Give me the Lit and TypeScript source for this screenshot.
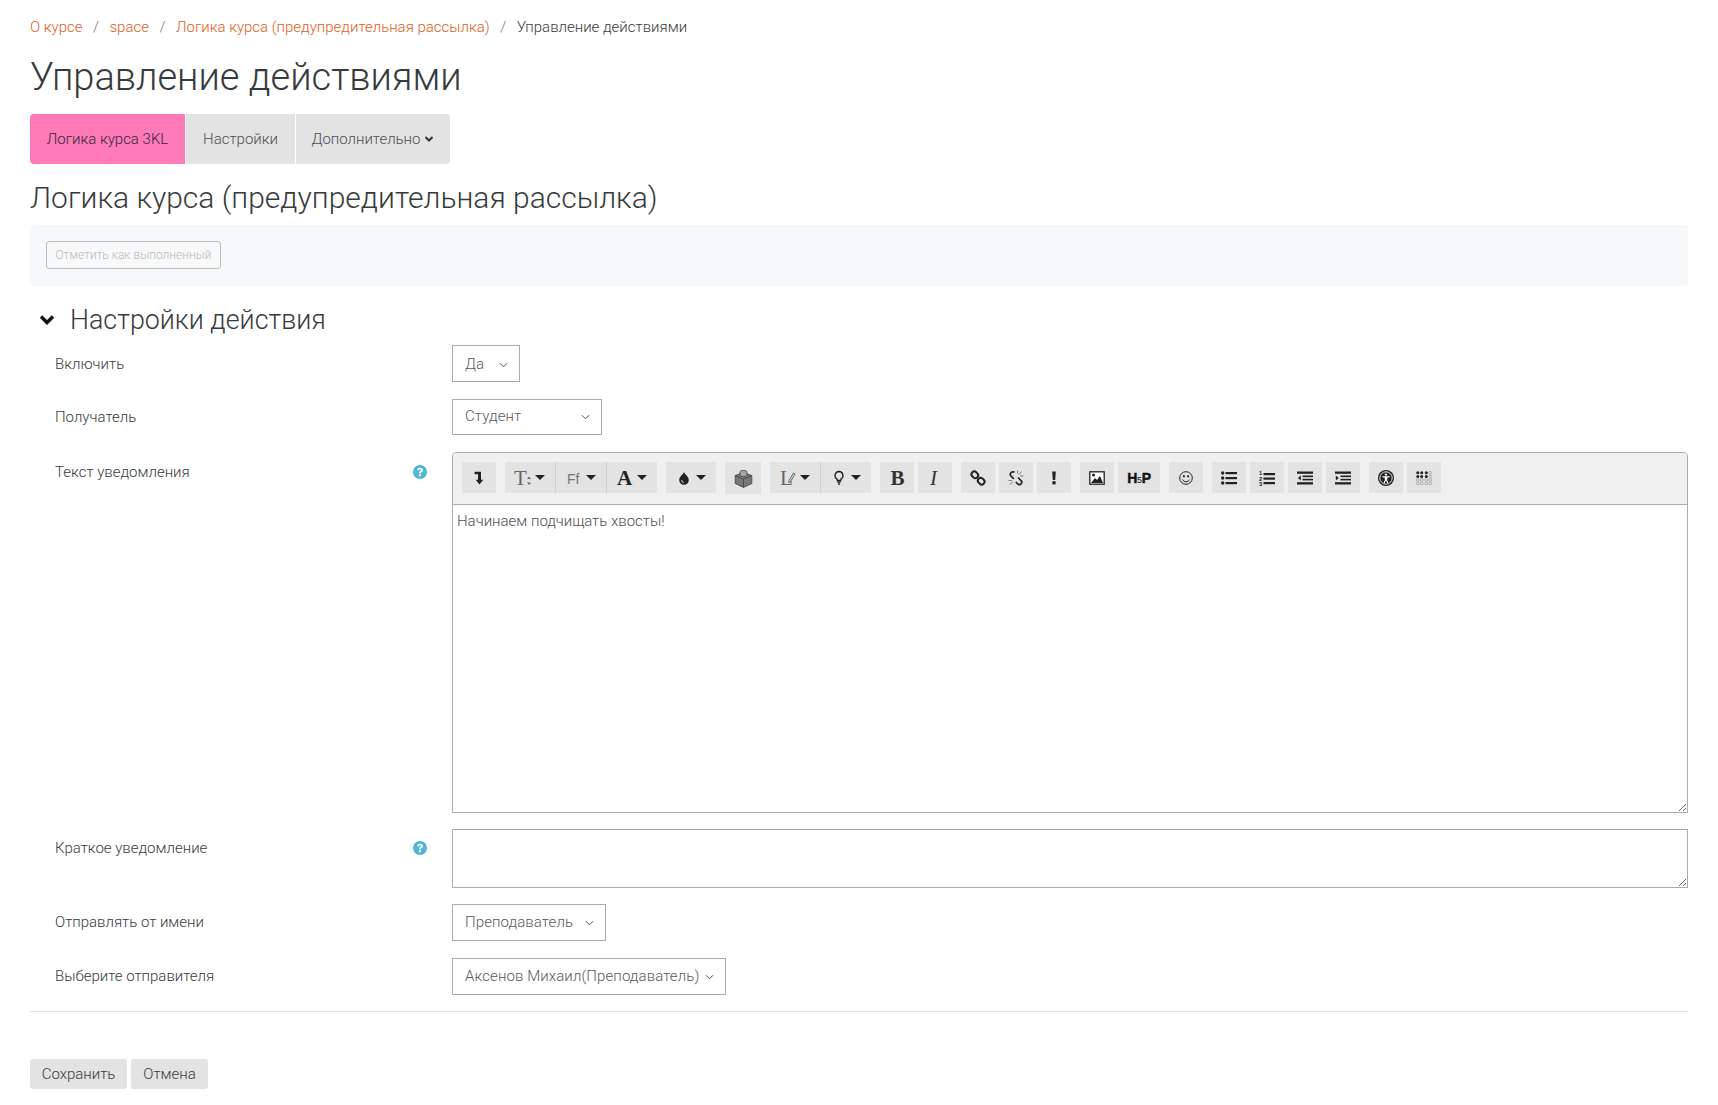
import { LitElement, html, css, svg } from "lit";
import { customElement } from "lit/decorators.js";

const chev = html`<svg class="chev" viewBox="0 0 10 6"><path d="M1 1l4 4 4-4" fill="none" stroke="#4a4f55" stroke-width="1.1"/></svg>`;

const I: Record<string, any> = {
  redo: svg`<path d="M3.500 1.800h6.500v8h2.300L8.500 14.500 4.700 9.800H7V4.300H3.500z" fill="#222"/>`,
  drop: svg`<path d="M8 2c1 2.500 4.800 5 4.800 8a4.800 4.800 0 0 1-9.600 0C3.200 7 7 4.500 8 2z" fill="#222"/><path d="M5.700 10.200a2.300 2.300 0 0 0 1.900 2.300" stroke="#fff" stroke-width="1" fill="none"/>`,
  lego: svg`<path d="M8 3l7 2.500v6.700L8 15.500 1 12.200V5.500z" fill="#777" stroke="#444" stroke-width=".7"/><path d="M1 5.500L8 8.500l7-3M8 8.500v7" stroke="#444" stroke-width=".7" fill="none"/><path d="M5 2.800c0-2.200 6-2.200 6 0V5c0 1.800-6 1.800-6 0z" fill="#a5a5a5" stroke="#444" stroke-width=".7"/>`,
  bulb: svg`<path d="M8 1.500a4 4 0 0 0-2.500 7.100c.6.600.8 1.100.8 1.900h3.400c0-.8.200-1.300.8-1.900A4 4 0 0 0 8 1.500z" fill="none" stroke="#222" stroke-width="1.400"/><path d="M6.300 12h3.400M7 14h2" stroke="#222" stroke-width="1.500"/>`,
  link: svg`<g fill="none" stroke="#222" stroke-width="2"><rect x="1.300" y="2" width="7" height="5.600" rx="2.700" transform="rotate(45 4.800 4.800)"/><rect x="7.700" y="8.400" width="7" height="5.600" rx="2.700" transform="rotate(45 11.200 11.200)"/></g>`,
  unlink: svg`<g fill="none" stroke="#222" stroke-width="1.700"><path d="M6.500 2.300C4.300.9 1.500 3 2.500 5.500L5.800 8.800M10 7.500l3.400 3.500c1.200 2-1 4.600-3.300 3.300L7.800 12"/></g><path d="M9.500 .5v3M13.500 1.500L11 4.500M15.500 6h-3.500M.5 10.500H4M1.800 14.800L5 11.800" stroke="#666" stroke-width=".8"/>`,
  bang: svg`<path d="M6.200 1.500h3.600l-.6 8.500H6.800z" fill="#222"/><rect x="6.400" y="11.200" width="3.200" height="3.200" fill="#222"/>`,
  image: svg`<rect x=".8" y="1.800" width="14.400" height="12.400" fill="#fff" stroke="#222" stroke-width="1.300"/><path d="M2 13l4-5 2 2 3-4 3 7z" fill="#222"/><circle cx="4.500" cy="5" r="1.500" fill="#222"/>`,
  smile: svg`<circle cx="8" cy="8" r="6.300" fill="none" stroke="#222" stroke-width="1"/><ellipse cx="5.900" cy="6.200" rx=".9" ry="1.300" fill="#222"/><ellipse cx="10.100" cy="6.200" rx=".9" ry="1.300" fill="#222"/><path d="M4.500 9.500c1 3 6 3 7 0" fill="none" stroke="#222"/>`,
  ul: svg`<g fill="#222"><circle cx="1.700" cy="3" r="1.700"/><circle cx="1.700" cy="8" r="1.700"/><circle cx="1.700" cy="13" r="1.700"/><rect x="4.500" y="2" width="11.500" height="2.200"/><rect x="4.500" y="7" width="11.500" height="2.200"/><rect x="4.500" y="12" width="11.500" height="2.200"/></g>`,
  ol: svg`<g fill="#222"><rect x="4.500" y="3" width="11.500" height="2.200"/><rect x="4.500" y="7.500" width="11.500" height="2.200"/><rect x="4.500" y="12" width="11.500" height="2.200"/></g><text x="0" y="5.200" class="sx bd" font-size="5.800" fill="#222">1</text><text x="0" y="10.500" class="sx bd" font-size="5.800" fill="#222">2</text><text x="0" y="15.800" class="sx bd" font-size="5.800" fill="#222">3</text>`,
  outdent: svg`<g fill="#222"><rect x="0" y="1.500" width="16" height="2.300"/><rect x="5.500" y="5.500" width="10.500" height="1.600"/><rect x="5.500" y="8.800" width="10.500" height="1.600"/><rect x="0" y="12.200" width="16" height="2.300"/><path d="M3.800 5.500v4.900L.8 8z"/></g>`,
  indent: svg`<g fill="#222"><rect x="0" y="1.500" width="16" height="2.300"/><rect x="5.500" y="5.500" width="10.500" height="1.600"/><rect x="5.500" y="8.800" width="10.500" height="1.600"/><rect x="0" y="12.200" width="16" height="2.300"/><path d="M.8 5.500v4.900L3.800 8z"/></g>`,
  a11y: svg`<circle cx="8" cy="8" r="8" fill="#222"/><circle cx="8" cy="8" r="6.200" fill="none" stroke="#fff" stroke-width=".9"/><circle cx="8" cy="4.600" r="1.200" fill="#fff"/><path d="M4.300 6.200h7.400v1L9.200 7.800v2.200l1.200 2.900H9.200L8 10.400l-1.200 2.500H5.600L6.800 10V7.800l-2.500-.6z" fill="#fff"/>`,
  braille: svg`<g fill="#222"><circle cx="1.800" cy="2.700" r="1.500"/><circle cx="5.700" cy="2.700" r="1.500"/><circle cx="1.800" cy="6.500" r="1.500"/><circle cx="5.700" cy="6.500" r="1.500"/><circle cx="10.300" cy="2.700" r="1.500"/><circle cx="10.300" cy="6.500" r="1.500"/></g><g fill="none" stroke="#999" stroke-width=".7"><circle cx="14.200" cy="2.700" r="1.400"/><circle cx="14.200" cy="6.500" r="1.400"/><circle cx="1.800" cy="10" r="1.400"/><circle cx="5.700" cy="10" r="1.400"/><circle cx="1.800" cy="13.500" r="1.400"/><circle cx="5.700" cy="13.500" r="1.400"/><circle cx="10.300" cy="10" r="1.400"/><circle cx="14.200" cy="10" r="1.400"/><circle cx="10.300" cy="13.500" r="1.400"/><circle cx="14.200" cy="13.500" r="1.400"/></g>`,
  pen: svg`<text x="0" y="15" class="tx" font-size="21" fill="#666">L</text><path d="M9 10.500l4.500-7.500 1.500 1-4.500 7.500-1.800 1z" fill="none" stroke="#555" stroke-width=".9"/>`,
  size: svg`<text x="-1" y="15" class="tx" font-size="21" fill="#666">T</text><path d="M14 6.500l-2 2.500h4zM14 15l-2-2.500h4z" fill="#666"/>`,
  ff: svg`<text x="1" y="14" class="sx" font-size="14" fill="#777">Ff</text>`,
  A: svg`<text x="0" y="15" class="tx bd" font-size="21" fill="#222">A</text>`,
  B: svg`<text x="1.500" y="15" class="tx bd" font-size="21" fill="#333">B</text>`,
  It: svg`<text x="3" y="15" class="tx it" font-size="21" fill="#333">I</text>`,
};

type B = { i?: string; caret?: boolean; c?: string };
const groups: B[][] = [
  [{ i: "redo", c: "w34" }],
  [{ i: "size", caret: true, c: "w50" }, { i: "ff", caret: true, c: "w50" }, { i: "A", caret: true, c: "w50" }],
  [{ i: "drop", caret: true, c: "w50" }],
  [{ i: "lego", c: "w36 tall" }],
  [{ i: "pen", caret: true, c: "w50" }, { i: "bulb", caret: true, c: "w50" }],
  [{ i: "B", c: "w34" }, { i: "It", c: "w34" }],
  [{ i: "link", c: "w34" }, { i: "unlink", c: "w34" }, { i: "bang", c: "w34" }],
  [{ i: "image", c: "w34" }, { i: "h5p", c: "w42" }],
  [{ i: "smile", c: "w34" }],
  [{ i: "ul", c: "w34" }, { i: "ol", c: "w34" }, { i: "outdent", c: "w34" }, { i: "indent", c: "w34" }],
  [{ i: "a11y", c: "w34" }, { i: "braille", c: "w34" }],
];

@customElement("app-root")
export class AppRoot extends LitElement {
  static styles = css`
    :host { display: block; font-family: "Roboto", "Liberation Sans", sans-serif; font-weight: 300; color: #373a3c; font-size: 15px; }
    * { box-sizing: border-box; }
    .page { padding: 16px 30px 17px; height: 1105px; }
    .crumbs { display: flex; align-items: center; height: 22px; gap: 10.500px; font-size: 15px; color: #373a3c; }
    .crumbs a { color: #dc5e22; }
    .crumbs .sep { color: #6c757d; }
    h1 { font-size: 38px; font-weight: 300; line-height: 48px; margin: 15px 0 0; color: #373a3c; }
    .tabs { display: flex; margin-top: 13px; gap: 1px; width: max-content; border-radius: 4px; overflow: hidden; }
    .tab { height: 50px; display: flex; align-items: center; justify-content: center; background: #e3e3e3; color: #4a4f55; gap: 4px; }
    .tab.active { background: #ff7ab6; color: #2a2a3a; width: 155px; }
    .t2 { width: 109px; }
    .t3 { width: 154px; }
    .tab svg { width: 10px; height: 8px; }
    h3 { font-size: 30px; font-weight: 300; line-height: 36px; margin: 16px 0 0; }
    .panel { margin-top: 9px; height: 61px; background: #f7f8f9; border-radius: 4px; padding: 16px; }
    .ghost { height: 28px; width: 175px; border: 1px solid #bdbdbd; border-radius: 3px; font-size: 12px; color: #bcbcbc; display: flex; align-items: center; justify-content: center; background: #f7f8f9; }
    .sect { display: flex; align-items: center; margin-top: 14px; height: 40px; padding-left: 9px; gap: 15px; font-size: 26.800px; }
    .sect svg { width: 16px; height: 12px; }
    .row { display: flex; margin-top: 17px; padding-left: 25px; }
    .row.first { margin-top: 5px; }
    .label { width: 397px; display: flex; justify-content: space-between; padding: 7px 25px 0 0; line-height: 22px; flex: none; }
    .row.first .label { padding-top: 8px; }
    .row.ed .label { padding-top: 9px; }
    .row.ta-first .label { padding-top: 8px; }
    .help { width: 14px; height: 14px; margin-top: 4px; }
    .sel { height: 37px; border: 1px solid #a3adba; padding: 0 11px 2px 12px; display: flex; align-items: center; justify-content: space-between; color: #55595c; letter-spacing: .1px; }
    .sel.w68 { padding-bottom: 0; }
    .chev { width: 9px; height: 6px; margin-top: 2px; }
    .w68 { width: 68px; } .w150 { width: 150px; height: 36px; } .w154 { width: 154px; } .w274 { width: 274px; }
    .editor { flex: 1; border: 1px solid #a3adba; border-radius: 4px 4px 0 0; overflow: hidden; }
    .bar { background: #f0f0f0; height: 52px; border-bottom: 1px solid #a3adba; padding: 9px 9px 0; display: flex; gap: 9px; align-items: flex-start; }
    .grp { display: flex; gap: 4px; }
    .grp.joined { gap: 1px; background: #d0d0d0; }
    .btn { height: 31px; background: #e3e3e3; display: flex; align-items: center; justify-content: center; gap: 4px; }
    .btn.w34 { width: 34px; } .btn.w36 { width: 36px; } .btn.w42 { width: 42px; } .btn.w50 { width: 50px; }
    .btn.tall { height: 32px; }
    .btn svg.ic { width: 16px; height: 16px; overflow: visible; }
    .btn.tall svg.ic { width: 19px; height: 19px; }
    .btn .caret { width: 10px; height: 5px; }
    .tx { font-family: "Liberation Serif", serif; }
    .sx { font-family: "Liberation Sans", sans-serif; }
    .bd { font-weight: 700; }
    .it { font-style: italic; }
    .h5p { font: 700 14px "Liberation Sans", sans-serif; color: #111; letter-spacing: -.3px; -webkit-text-stroke: .4px #111; }
    .h5p small { font-size: 9px; -webkit-text-stroke: 0; font-weight: 400; }
    .body { height: 307px; padding: 5px 4px; line-height: 22px; color: #4a4f55; resize: vertical; overflow: auto; display: block; }
    .ta { flex: 1; height: 59px; border: 1px solid #a3adba; display: block; resize: vertical; overflow: auto; }
    .row.ta-first, .row.ta-row { margin-top: 16px; }
    hr { border: 0; border-top: 1px solid #dee2e6; margin: 16px 0 0; }
    .actions { display: flex; gap: 4px; margin-top: 47px; }
    .act { height: 30px; background: #e3e3e3; border-radius: 3px; display: flex; align-items: center; justify-content: center; color: #373a3c; }
    .a1 { width: 97px; } .a2 { width: 77px; }
  `;

  private helpIcon() {
    return html`<svg class="help" viewBox="0 0 14 14"><circle cx="7" cy="7" r="7" fill="#4fb6d8"/><path d="M4.200 5.200C4.300 3.400 5.700 2.700 7.100 2.700c1.700 0 2.900 1 2.900 2.400 0 2-2.100 1.900-2.100 3.500H6c0-2.500 2-2.500 2-3.500 0-.5-.4-.8-.9-.8s-1 .3-1.100 1z" fill="#fff"/><rect x="6" y="9.400" width="1.900" height="1.800" fill="#fff"/></svg>`;
  }

  private renderBtn(b: B) {
    const inner = b.i === "h5p"
      ? html`<span class="h5p">H<small>5</small>P</span>`
      : html`<svg class="ic" viewBox="0 0 16 16">${I[b.i!]}</svg>`;
    return html`<div class="btn ${b.c}">${inner}${b.caret ? html`<svg class="caret" viewBox="0 0 10 5"><path d="M0 0h10L5 5z" fill="#222"/></svg>` : ""}</div>`;
  }

  render() {
    return html`<div class="page">
      <div class="crumbs"><a>О курсе</a><span class="sep">/</span><a>space</a><span class="sep">/</span><a>Логика курса (предупредительная рассылка)</a><span class="sep">/</span><span>Управление действиями</span></div>
      <h1>Управление действиями</h1>
      <div class="tabs">
        <div class="tab active">Логика курса 3KL</div>
        <div class="tab t2">Настройки</div>
        <div class="tab t3">Дополнительно<svg viewBox="0 0 10 8"><path d="M1.500 2l3.500 3.500L8.500 2" fill="none" stroke="#333" stroke-width="2"/></svg></div>
      </div>
      <h3>Логика курса (предупредительная рассылка)</h3>
      <div class="panel"><div class="ghost">Отметить как выполненный</div></div>
      <div class="sect"><svg viewBox="0 0 16 12"><path d="M2 2.500l6 6 6-6" fill="none" stroke="#111" stroke-width="3.500"/></svg>Настройки действия</div>
      <div class="row first"><div class="label">Включить</div><div class="sel w68">Да${chev}</div></div>
      <div class="row"><div class="label">Получатель</div><div class="sel w150">Студент${chev}</div></div>
      <div class="row ed"><div class="label">Текст уведомления${this.helpIcon()}</div>
        <div class="editor">
          <div class="bar">${groups.map((g) => html`<div class="grp ${g[0].caret && g.length > 1 ? "joined" : ""}">${g.map((b) => this.renderBtn(b))}</div>`)}</div>
          <div class="body">Начинаем подчищать хвосты!</div>
        </div>
      </div>
      <div class="row ta-first"><div class="label">Краткое уведомление${this.helpIcon()}</div><div class="ta"></div></div>
      <div class="row ta-row"><div class="label">Отправлять от имени</div><div class="sel w154">Преподаватель${chev}</div></div>
      <div class="row"><div class="label">Выберите отправителя</div><div class="sel w274">Аксенов Михаил(Преподаватель)${chev}</div></div>
      <hr />
      <div class="actions"><div class="act a1">Сохранить</div><div class="act a2">Отмена</div></div>
    </div>`;
  }
}
